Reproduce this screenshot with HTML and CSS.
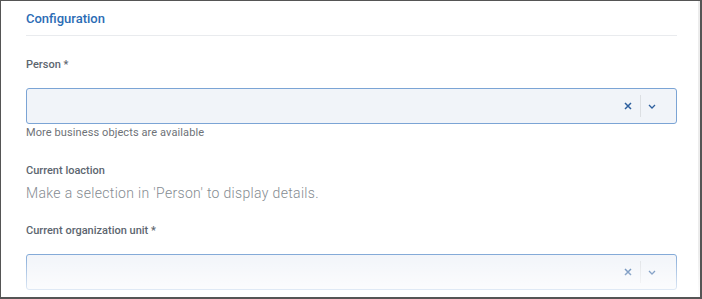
FILE: index.html
```html
<!DOCTYPE html>
<html lang="en">
<head>
    <meta charset="UTF-8">
    <meta name="viewport" content="width=device-width, initial-scale=1.0">
    <title>Configuration</title>
    <link rel="stylesheet" href="styles.css">
</head>
<body>

<div class="frame">
    <div class="panel">
        <h2 class="section-title">Configuration</h2>

        <div class="field first">
            <label class="field-label">Person *</label>
            <div class="select">
                <div class="select-value"></div>
                <span class="select-clear">
                    <svg width="8" height="8" viewBox="0 0 8 8"><path d="M1 1 L7 7 M7 1 L1 7" stroke="currentColor" stroke-width="1.5" fill="none"/></svg>
                </span>
                <span class="select-sep"></span>
                <span class="select-arrow">
                    <svg width="8" height="5" viewBox="0 0 8 5"><path d="M1 1 L4 4 L7 1" stroke="currentColor" stroke-width="1.3" fill="none"/></svg>
                </span>
            </div>
            <div class="field-help">More business objects are available</div>
        </div>

        <div class="field">
            <label class="field-label">Current loaction</label>
            <div class="field-text">Make a selection in 'Person' to display details.</div>
        </div>

        <div class="field">
            <label class="field-label">Current organization unit *</label>
            <div class="select">
                <div class="select-value"></div>
                <span class="select-clear">
                    <svg width="8" height="8" viewBox="0 0 8 8"><path d="M1 1 L7 7 M7 1 L1 7" stroke="currentColor" stroke-width="1.5" fill="none"/></svg>
                </span>
                <span class="select-sep"></span>
                <span class="select-arrow">
                    <svg width="8" height="5" viewBox="0 0 8 5"><path d="M1 1 L4 4 L7 1" stroke="currentColor" stroke-width="1.3" fill="none"/></svg>
                </span>
            </div>
        </div>
    </div>
    <!-- 下端のフェード -->
    <div class="fade"></div>
</div>

</body>
</html>
```

FILE: styles.css
```css
html, body {
    margin: 0;
    padding: 0;
    background-color: #fff;
}
body {
    font-family: Roboto, "Liberation Sans", Arial, sans-serif;
}
.frame {
    position: relative;
    box-sizing: border-box;
    height: 299px;
    border: 1px solid #555;
    border-right-width: 2px;
    border-bottom-width: 2px;
    overflow: hidden;
}
.panel {
    box-sizing: border-box;
    height: 100%;
    padding: 10px 21px 0 25px;
    border-right: 2px solid #ececec;
}
.section-title {
    margin: 0;
    padding-bottom: 8px;
    font-size: 13px;
    line-height: 16px;
    font-weight: 500;
    color: #2b6cb5;
    border-bottom: 1px solid #e9ebee;
}
.field {
    margin-top: 24px;
}
.field.first {
    margin-top: 22px;
}
.field + .field + .field {
    margin-top: 21px;
}
.field-label {
    display: block;
    font-size: 11px;
    line-height: 14px;
    font-weight: 500;
    color: #5d666f;
}
.select {
    display: flex;
    align-items: center;
    box-sizing: border-box;
    height: 36px;
    margin-top: 16px;
    padding-right: 16px;
    background-color: #f1f4f9;
    border: 1px solid #7ba4d5;
    border-radius: 3px;
}
.select-value {
    flex: 1;
}
.select-clear {
    display: flex;
    justify-content: center;
    width: 16px;
    color: #2d5f9e;
}
.select-sep {
    width: 1px;
    height: 22px;
    margin: 0 3px 0 4px;
    background-color: #dcdfe3;
}
.select-arrow {
    display: flex;
    justify-content: center;
    width: 16px;
    color: #2d5f9e;
}
.field-help {
    margin-top: 2px;
    font-size: 11px;
    line-height: 14px;
    letter-spacing: 0.1px;
    color: #6e7277;
}
.field-text {
    margin-top: 5px;
    font-size: 14px;
    line-height: 20px;
    font-weight: 300;
    letter-spacing: 0.33px;
    color: #858b91;
}
.fade {
    position: absolute;
    left: 0;
    right: 0;
    bottom: 0;
    height: 46px;
    background: linear-gradient(rgba(255, 255, 255, 0), rgba(255, 255, 255, 0.9));
    pointer-events: none;
}
```
